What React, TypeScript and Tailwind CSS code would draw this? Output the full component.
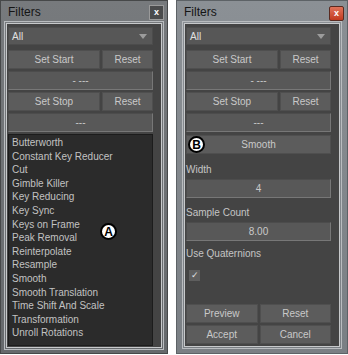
import React from "react";

const filters = [
  "Butterworth",
  "Constant Key Reducer",
  "Cut",
  "Gimble Killer",
  "Key Reducing",
  "Key Sync",
  "Keys on Frame",
  "Peak Removal",
  "Reinterpolate",
  "Resample",
  "Smooth",
  "Smooth Translation",
  "Time Shift And Scale",
  "Transformation",
  "Unroll Rotations",
];

const Badge = ({ letter }: { letter: string }) => (
  <span className="flex h-[17px] w-[17px] items-center justify-center rounded-full border-2 border-black bg-white text-[12px] font-bold leading-none text-black">
    {letter}
  </span>
);

const Btn = ({ label, className = "" }: { label: string; className?: string }) => (
  <div
    className={
      "flex h-[19px] items-center justify-center border border-[#4f4f4f] bg-[#5c5c5c] text-[#c9c9c9] " +
      className
    }
  >
    {label}
  </div>
);

const Field = ({ value }: { value: string }) => (
  <div className="flex h-[19px] items-center justify-center border border-t-[#4c4c4c] border-l-[#4c4c4c] border-r-[#777] border-b-[#777] bg-[#585858] text-[#c9c9c9]">
    {value}
  </div>
);

const Label = ({ text }: { text: string }) => (
  <div className="h-[13px] leading-[13px] text-[#c4c4c4]">{text}</div>
);

const Window = ({
  active,
  children,
}: {
  active?: boolean;
  children: React.ReactNode;
}) => (
  <div
    className={
      "flex h-[354px] flex-col border " +
      (active
        ? "w-[172px] border-[#5d6266] bg-gradient-to-b from-[#8b9095] to-[#7a7f84]"
        : "w-[168px] border-[#464849] bg-gradient-to-b from-[#777a7d] to-[#66696c]")
    }
  >
    <div className="flex h-[20px] items-center justify-between pl-[7px] pr-[3px]">
      <span className="pt-[2px] text-[12px] text-[#151515]">Filters</span>
      {active ? (
        <span className="mt-[4px] flex h-[15px] w-[15px] items-center justify-center rounded-[2px] border border-[#5a2a20] bg-gradient-to-b from-[#e0735a] to-[#c2391d] text-[9px] font-bold leading-none text-white">
          x
        </span>
      ) : (
        <span className="mt-[2px] flex h-[15px] w-[15px] items-center justify-center border border-[#9a9a9a] bg-[#4a4b4c] text-[9px] font-bold leading-none text-white">
          x
        </span>
      )}
    </div>
    <div
      className={
        "flex flex-1 flex-col " + (active ? "px-[5px] pb-[4px]" : "px-[3px] pb-[3px]")
      }
    >
      <div className="flex flex-1 flex-col border border-[#b9bcbf] p-[1px]">
        <div className="flex flex-1 flex-col border border-[#c7c9cb] bg-[#444]">
          {children}
        </div>
      </div>
    </div>
  </div>
);

const Header = () => (
  <>
    <div className="flex h-[18px] items-center justify-between border border-[#4c4c4c] bg-[#575757] pl-[3px] pr-[5px] text-[#e0e0e0]">
      <span>All</span>
      <span className="h-0 w-0 border-x-[4px] border-t-[5px] border-x-transparent border-t-[#9c9c9c]" />
    </div>
    <div className="mt-[5px] flex gap-[2px]">
      <Btn label="Set Start" className="w-[92px]" />
      <Btn label="Reset" className="flex-1" />
    </div>
    <div className="mt-[2px]">
      <Field value="- ---" />
    </div>
    <div className="mt-[2px] flex gap-[2px]">
      <Btn label="Set Stop" className="w-[92px]" />
      <Btn label="Reset" className="flex-1" />
    </div>
    <div className="mt-[2px]">
      <Field value="---" />
    </div>
  </>
);

export default function App() {
  return (
    <div
      className="flex h-[355px] w-[348px] gap-[8px] bg-white text-[10px]"
      style={{ fontFamily: '"Liberation Sans", Arial, sans-serif' }}
    >
      <Window>
        <div className="flex flex-1 flex-col pb-[1px] pl-[1px] pr-[8px] pt-[3px]">
          <Header />
          <div className="relative mt-[2px] flex-1 border border-[#1c1c1c] bg-[#2b2b2b] pl-[3px] pt-[1px]">
            {filters.map((f) => (
              <div key={f} className="h-[13.6px] leading-[13.6px] text-[#c2c2c2]">
                {f}
              </div>
            ))}
            <div className="absolute left-[91px] top-[88px]">
              <Badge letter="A" />
            </div>
          </div>
        </div>
      </Window>
      <Window active>
        <div className="flex flex-1 flex-col pb-[2px] pl-[1px] pr-[8px] pt-[3px]">
          <Header />
          <div className="relative mt-[3px]">
            <Btn label="Smooth" className="h-[18px]" />
            <div className="absolute left-[2px] top-[1px]">
              <Badge letter="B" />
            </div>
          </div>
          <div className="mt-[9px]">
            <Label text="Width" />
          </div>
          <div className="mt-[3px]">
            <Field value="4" />
          </div>
          <div className="mt-[8px]">
            <Label text="Sample Count" />
          </div>
          <div className="mt-[3px]">
            <Field value="8.00" />
          </div>
          <div className="mt-[6px]">
            <Label text="Use Quaternions" />
          </div>
          <div className="ml-[3px] mt-[10px] flex h-[11px] w-[11px] items-center justify-center bg-[#5e5e5e] text-[9px] leading-none text-[#e0e0e0]">
            ✓
          </div>
          <div className="flex-1" />
          <div className="flex gap-[2px]">
            <Btn label="Preview" className="flex-1" />
            <Btn label="Reset" className="flex-1" />
          </div>
          <div className="mt-[2px] flex gap-[2px]">
            <Btn label="Accept" className="flex-1" />
            <Btn label="Cancel" className="flex-1" />
          </div>
        </div>
      </Window>
    </div>
  );
}
